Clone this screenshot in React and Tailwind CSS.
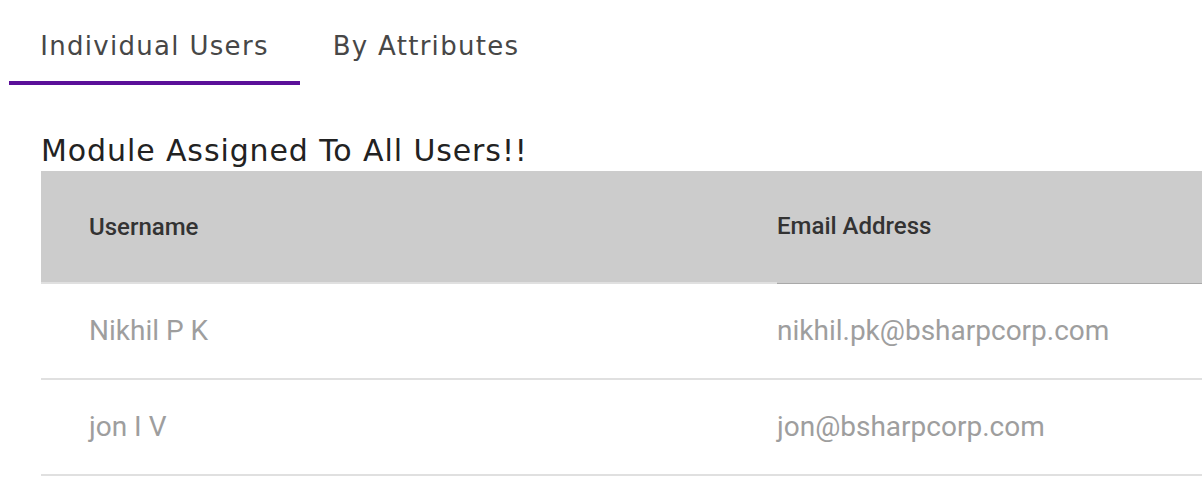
const users = [
  { name: "Nikhil P K", email: "nikhil.pk@bsharpcorp.com" },
  { name: "jon I V", email: "jon@bsharpcorp.com" },
];

const display = { fontFamily: '"DejaVu Sans", "Open Sans", sans-serif' };
const body = { fontFamily: 'Roboto, "Liberation Sans", sans-serif' };

export default function App() {
  return (
    <div className="bg-white min-h-screen overflow-hidden">
      {/* Tabs */}
      <div className="flex pl-[9px]" style={display}>
        <button className="h-[85px] w-[291px] pt-[12px] flex items-center justify-center border-b-4 border-[#5b0f99] text-[26px] tracking-[1.3px] text-[#474747]">
          Individual Users
        </button>
        <button className="h-[85px] w-[252px] pt-[12px] flex items-center justify-center border-b-4 border-transparent text-[26px] tracking-[1.3px] text-[#474747]">
          By Attributes
        </button>
      </div>

      <section className="pl-[41px]">
        <h2
          className="mt-[48px] mb-[2px] h-[36px] leading-[36px] text-[30px] tracking-[0.9px] text-[#222]"
          style={display}
        >
          Module Assigned To All Users!!
        </h2>

        {/* Table */}
        <div style={body}>
          <div className="flex bg-[#cccccc] h-[113px]">
            <div className="w-[736px] pl-[48px] flex items-center border-b-2 border-[#e0e0e0] text-[24px] font-medium text-[#333]">
              Username
            </div>
            <div className="flex-1 flex items-center border-b border-[#a9a9a9] pb-[2px] text-[24px] font-medium text-[#333]">
              Email Address
            </div>
          </div>
          {users.map((u) => (
            <div key={u.email} className="flex h-[96px] border-b-2 border-[#e0e0e0] text-[28px] text-[#9e9e9e]">
              <div className="w-[736px] pl-[48px] flex items-center">{u.name}</div>
              <div className="flex-1 flex items-center">{u.email}</div>
            </div>
          ))}
        </div>
      </section>
    </div>
  );
}
